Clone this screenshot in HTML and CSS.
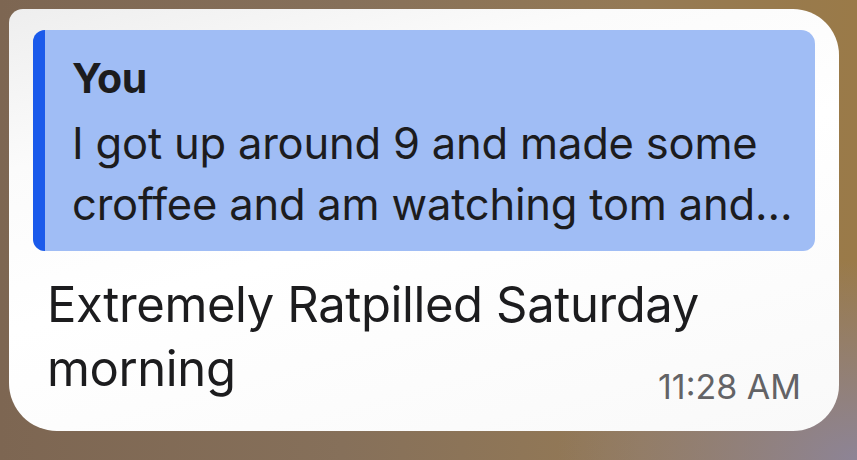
FILE: index.html
```html
<!DOCTYPE html>
<html>
<head>
<meta charset="utf-8">
<link rel="stylesheet" href="styles.css">
</head>
<body>
<div class="card">
  <div class="quote">
    <div class="quote-bar"></div>
    <div class="quote-body">
      <div class="quote-author">You</div>
      <div class="quote-text">I got up around 9 and made some<br>croffee and am watching tom and…</div>
    </div>
  </div>
  <div class="message">
    <div class="message-text">Extremely Ratpilled Saturday<br>morning</div>
    <div class="message-time">11:28 AM</div>
  </div>
</div>
</body>
</html>
```

FILE: styles.css
```css
html, body {
  margin: 0;
  padding: 0;
}
body {
  width: 857px;
  height: 460px;
  overflow: hidden;
  background:
    radial-gradient(ellipse 300px 200px at 857px 460px, #8d8496 0%, rgba(141,132,150,0) 100%),
    linear-gradient(90deg, #7d6652 0%, #86705a 40%, #957a55 75%, #9a7a48 100%);
  font-family: Inter, "Noto Sans", sans-serif;
  padding: 9px 0 0 9px;
  box-sizing: border-box;
}
.card {
  width: 830px;
  height: 422px;
  box-sizing: border-box;
  border-radius: 14px 46px 46px 48px;
  background: linear-gradient(165deg, #eeeeee 0%, #fbfbfb 25%, #ffffff 50%, #f9f9f9 100%);
  padding: 21px 24px 0 24px;
  display: flex;
  flex-direction: column;
}
.quote {
  display: flex;
  height: 221px;
  flex: none;
  border-radius: 12px 14px 12px 12px;
  overflow: hidden;
  background: #a0bdf5;
}
.quote-bar {
  width: 12px;
  flex: none;
  background: #1a5aeb;
}
.quote-body {
  flex: 1;
  min-width: 0;
  padding: 24px 0 0 27px;
  color: #1c1c1e;
  white-space: nowrap;
}
.quote-author {
  font-weight: 700;
  font-size: 41px;
  line-height: 48px;
  letter-spacing: -0.4px;
}
.quote-text {
  font-size: 43.5px;
  line-height: 61px;
  margin-top: 11px;
  letter-spacing: -0.2px;
}
.message {
  display: grid;
  padding: 22px 14px 0 14px;
  white-space: nowrap;
}
.message-text {
  grid-area: 1 / 1;
  font-size: 49px;
  line-height: 64px;
  color: #1c1c1e;
  letter-spacing: -0.4px;
}
.message-time {
  grid-area: 1 / 1;
  justify-self: end;
  align-self: end;
  font-size: 34px;
  line-height: 28px;
  color: #636366;
}
```
